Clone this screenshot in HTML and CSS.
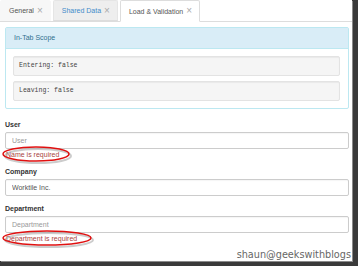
FILE: index.html
```html
<!DOCTYPE html>
<html lang="en">
<head>
    <meta charset="UTF-8">
    <title>Tabs</title>
    <link rel="stylesheet" href="styles.css">
</head>
<body>
    <div class="page">
        <ul class="nav-tabs">
            <li class="tab tab-plain">General <span class="close">&times;</span></li>
            <li class="tab tab-hover">Shared Data <span class="close">&times;</span></li>
            <li class="tab active">Load &amp; Validation <span class="close">&times;</span></li>
        </ul>

        <div class="tab-content">
            <div class="panel">
                <div class="panel-heading">In-Tab Scope</div>
                <div class="panel-body">
                    <div class="well">Entering: false</div>
                    <div class="well">Leaving: false</div>
                </div>
            </div>

            <form autocomplete="off">
                <div class="form-group">
                    <label>User</label>
                    <input type="text" placeholder="User">
                    <div class="help-block">
                        Name is required
                        <svg class="mark" width="72" height="20" viewBox="0 0 72 20">
                            <ellipse cx="36" cy="11" rx="33" ry="7" fill="none" stroke="#999" stroke-width="2" opacity="0.5"/>
                            <ellipse cx="34" cy="9" rx="33" ry="7" fill="none" stroke="#e01010" stroke-width="1.5"/>
                        </svg>
                    </div>
                </div>
                <div class="form-group">
                    <label>Company</label>
                    <input type="text" value="Worktile Inc.">
                </div>
                <div class="form-group">
                    <label>Department</label>
                    <input type="text" placeholder="Department">
                    <div class="help-block">
                        Department is required
                        <svg class="mark" width="94" height="20" viewBox="0 0 94 20">
                            <ellipse cx="47" cy="11" rx="44" ry="7" fill="none" stroke="#999" stroke-width="2" opacity="0.5"/>
                            <ellipse cx="45" cy="9" rx="44" ry="7" fill="none" stroke="#e01010" stroke-width="1.5"/>
                        </svg>
                    </div>
                </div>
            </form>
        </div>

        <div class="watermark">shaun@geekswithblogs</div>
    </div>
</body>
</html>
```

FILE: styles.css
```css
html, body {
    margin: 0;
    height: 100%;
}

body {
    background: #3a3a3a;
    font-family: "Liberation Sans", Arial, sans-serif;
    font-size: 7px;
    color: #333;
}

.page {
    position: relative;
    width: 352px;
    height: 261px;
    background: #fff;
    box-shadow: 1px 1px 0 #8a8a8a;
    overflow: hidden;
}

.nav-tabs {
    display: flex;
    margin: 0;
    padding: 0;
    list-style: none;
    border-bottom: 1px solid #ddd;
    height: 21px;
}

.tab {
    display: flex;
    align-items: center;
    height: 21px;
    box-sizing: border-box;
    padding: 0 7px 0 8px;
    margin-right: 2px;
    border: 1px solid transparent;
    border-radius: 2px 2px 0 0;
    color: #555;
}

.tab-plain {
    background: #f7f7f7;
    border-color: #f7f7f7;
}

.tab-hover {
    background: #eee;
    border-color: #e5e5e5 #e5e5e5 #ddd;
    color: #428bca;
}

.tab.active {
    background: #fff;
    border-color: #ddd #ddd transparent;
    height: 22px;
    margin-bottom: -1px;
}

.close {
    margin-left: 3px;
    color: #aaa;
    font-size: 10px;
    line-height: 10px;
}

.tab-content {
    padding: 5px 3px 0 5px;
}

.panel {
    border: 1px solid #bce8f1;
    border-radius: 2px;
    margin-bottom: 11px;
}

.panel-heading {
    background: #d9edf7;
    color: #31708f;
    height: 20px;
    line-height: 20px;
    padding: 0 8px;
    border-bottom: 1px solid #bce8f1;
}

.panel-body {
    padding: 7px 8px 7px 7px;
}

.well {
    background: #f5f5f5;
    border: 1px solid #e3e3e3;
    border-radius: 2px;
    box-shadow: inset 0 1px 1px rgba(0, 0, 0, 0.05);
    height: 18px;
    line-height: 18px;
    padding: 0 5px;
    margin-bottom: 5px;
    font-family: "Liberation Mono", "DejaVu Sans Mono", monospace;
    font-size: 6.5px;
    color: #444;
}

.well:last-child {
    margin-bottom: 0;
}

.form-group {
    margin-bottom: 8px;
}

.form-group label {
    display: block;
    font-weight: bold;
    line-height: 9px;
    margin-bottom: 3px;
}

.form-group input {
    display: block;
    width: 100%;
    height: 17px;
    box-sizing: border-box;
    border: 1px solid #ccc;
    border-radius: 2px;
    padding: 0 6px;
    background: #fff;
    font-family: "Liberation Sans", Arial, sans-serif;
    font-size: 7px;
    color: #555;
    box-shadow: inset 0 1px 1px rgba(0, 0, 0, 0.04);
}

.form-group input::placeholder {
    color: #999;
    opacity: 1;
}

.help-block {
    position: relative;
    color: #a94442;
    line-height: 9px;
    margin: 1px 0 2px 1px;
}

.mark {
    position: absolute;
    left: -4px;
    top: -5px;
}

.watermark {
    position: absolute;
    right: 1px;
    bottom: 0;
    font-family: "DejaVu Sans", Verdana, sans-serif;
    font-size: 9.7px;
    color: #666;
    line-height: 13px;
}
```
